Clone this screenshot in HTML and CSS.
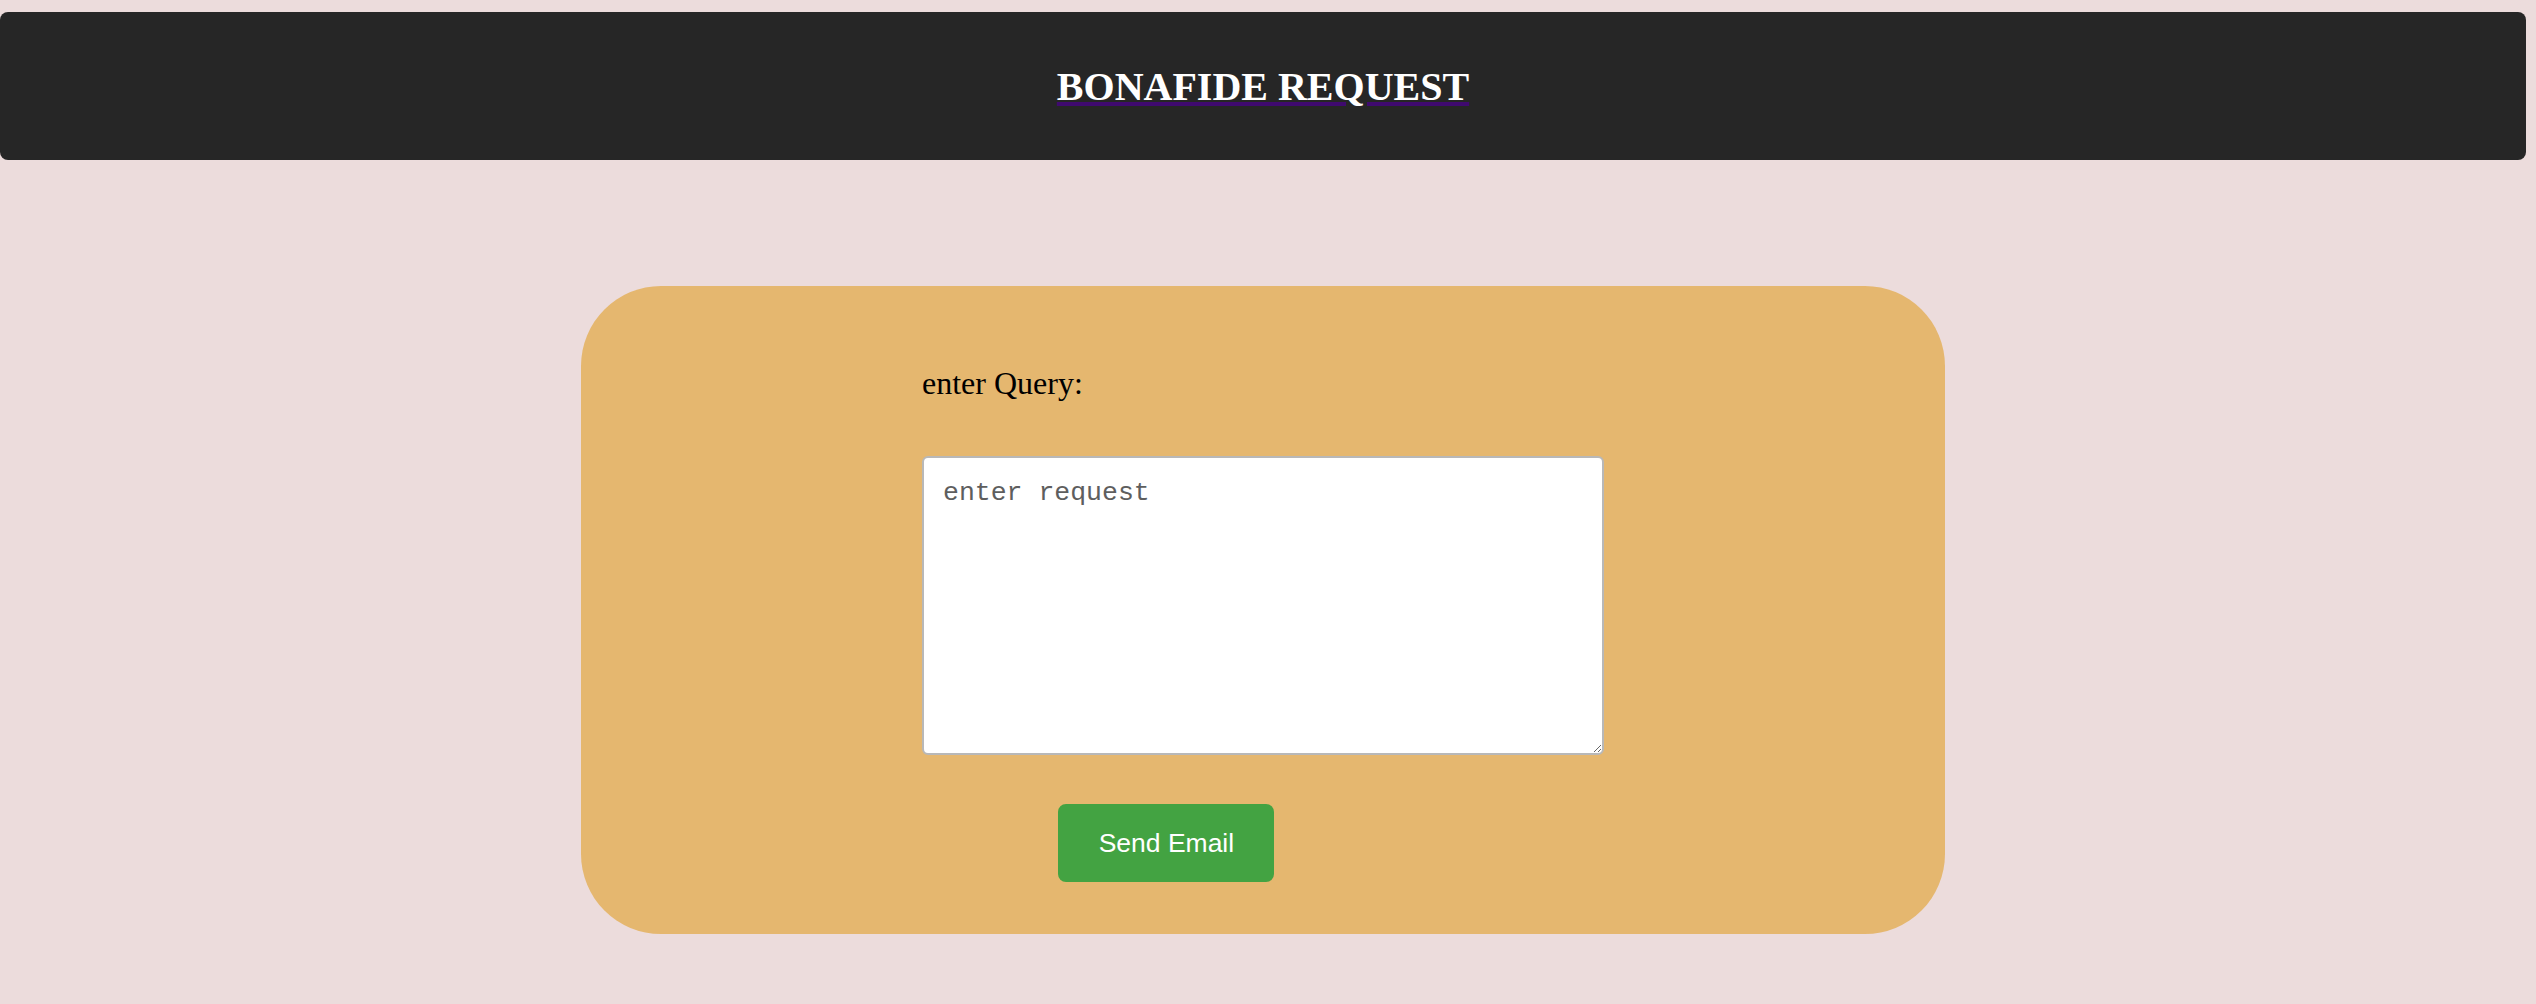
FILE: index.html
```html
<!DOCTYPE html>
<html lang="en">
<head>
<meta charset="utf-8">
<title>Bonafide Request</title>
<link rel="stylesheet" href="styles.css">
</head>
<body>
<div class="page">
  <header class="topbar">
    <a class="title-link" href="#"><h1 class="title">BONAFIDE REQUEST</h1></a>
  </header>
  <main class="card">
    <form class="form">
      <label class="label" for="query">enter Query:</label>
      <textarea id="query" class="query" placeholder="enter request"></textarea>
      <button type="button" class="send">Send Email</button>
    </form>
  </main>
</div>
</body>
</html>
```

FILE: styles.css
```css
html, body {
  margin: 0;
  padding: 0;
  background: #ecdcdc;
}

.page {
  width: 2526px;
  padding-top: 12px;
}

.topbar {
  height: 148px;
  background: #262626;
  border-radius: 8px;
  display: flex;
  align-items: center;
  justify-content: center;
}

.title-link {
  color: #ffffff;
  text-decoration: underline;
  text-decoration-color: #3f0a6f;
  text-decoration-thickness: 4px;
  text-underline-offset: 2px;
}

.title {
  margin: 0;
  font-family: "Liberation Serif", "Times New Roman", serif;
  font-weight: bold;
  font-size: 40px;
  color: #ffffff;
  display: inline;
}

.card {
  box-sizing: border-box;
  width: 1364px;
  height: 648px;
  margin: 126px auto 0;
  background: #e5b76f;
  border-radius: 80px;
  padding-top: 79px;
}

.form {
  width: 50%;
  margin: 0 auto;
  display: flex;
  flex-direction: column;
  align-items: flex-start;
}

.label {
  font-family: "Liberation Serif", "Times New Roman", serif;
  font-size: 32px;
  color: #000;
  line-height: normal;
}

.query {
  box-sizing: border-box;
  width: 100%;
  height: 299px;
  margin-top: 54px;
  padding: 20px 19px;
  border: 2px solid #b8b8b8;
  border-radius: 6px;
  background: #ffffff;
  font-family: "Liberation Mono", "Courier New", monospace;
  font-size: 26.5px;
  color: #222;
}

.query::placeholder {
  color: #5e5e5e;
}

.send {
  box-sizing: border-box;
  width: 216px;
  height: 78px;
  margin-top: 49px;
  margin-left: 20%;
  padding: 0;
  border: none;
  border-radius: 8px;
  background: #43a342;
  color: #ffffff;
  font-family: "Liberation Sans", Arial, sans-serif;
  font-size: 26.5px;
  display: flex;
  align-items: center;
  justify-content: center;
}
```
